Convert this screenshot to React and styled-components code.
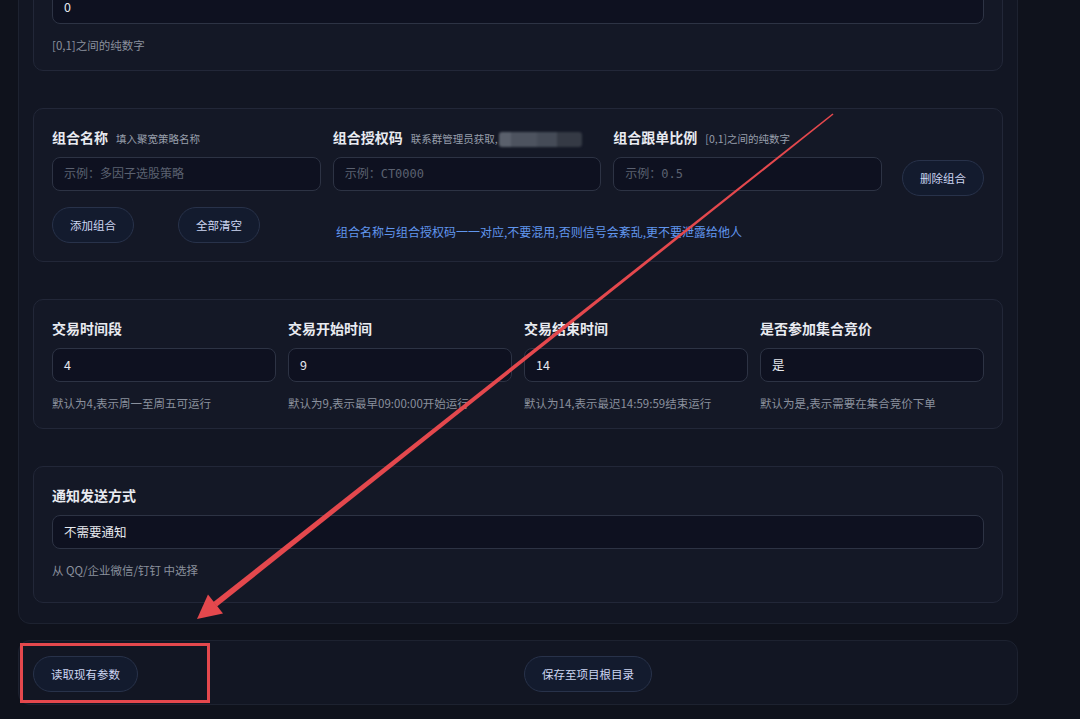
import React from "react";
import styled, { createGlobalStyle } from "styled-components";

const Global = createGlobalStyle`
  html, body { margin: 0; padding: 0; background: #0f121c; overflow: hidden; }
  body { font-family: "Noto Sans CJK SC", "Noto Sans", sans-serif; }
  * { box-sizing: border-box; }
`;

const Page = styled.div`
  width: 1080px;
  height: 719px;
  padding: 0 62px 0 18px;
  overflow: hidden;
  position: relative;
`;

const Panel = styled.div`
  margin-top: -45px;
  background: #121623;
  border: 1px solid #1d2230;
  border-radius: 12px;
  padding: 15px 14px 20px;
  display: flex;
  flex-direction: column;
  gap: 37px;
`;

const Card = styled.section`
  background: #141826;
  border: 1px solid #222738;
  border-radius: 10px;
  padding: ${(p) => p.$pt ?? 18}px 18px ${(p) => p.$pb ?? 16}px;
`;

const Field = styled.div`
  display: flex;
  flex-direction: column;
  flex: 1 1 0;
  min-width: 0;
`;

const LabelRow = styled.div`
  display: flex;
  align-items: baseline;
  gap: 8px;
  height: 20px;
  white-space: nowrap;
`;

const Label = styled.span`
  font-size: 14px;
  line-height: 20px;
  font-weight: 700;
  color: #e8eaf0;
`;

const Hint = styled.span`
  font-size: 10.5px;
  color: #979eab;
  display: inline-flex;
  align-items: center;
`;

const Blur = styled.span`
  display: inline-block;
  width: 83px;
  height: 15px;
  margin-left: 1px;
  border-radius: 3px;
  position: relative;
  top: 1px;
  background: linear-gradient(
    90deg,
    #5a606c 0 14%,
    #4d535f 14% 46%,
    #454b57 46% 70%,
    #353a45 70% 100%
  );
  filter: blur(1.2px);
`;

const Input = styled.div`
  margin-top: ${(p) => p.$mt ?? 10}px;
  height: 34px;
  border: 1px solid #2d3344;
  border-radius: 8px;
  background: #0e1120;
  padding: 0 11px;
  display: flex;
  align-items: center;
  line-height: 1;
  font-size: 12.5px;
  color: ${(p) => (p.$placeholder ? "#5b6170" : "#e6e8ee")};
  font-family: ${(p) =>
    p.$placeholder
      ? `"DejaVu Sans Mono", "Noto Sans CJK SC", monospace`
      : `"Noto Sans CJK SC", "Noto Sans", sans-serif`};
  ${(p) => p.$placeholder && "font-size: 12px;"}
`;

const Helper = styled.div`
  margin-top: 12px;
  font-size: 11.5px;
  line-height: 18px;
  color: #8a909d;
  white-space: nowrap;
`;

const FieldRow = styled.div`
  display: flex;
  gap: 12px;
`;

const Grid4 = styled.div`
  display: grid;
  grid-template-columns: repeat(4, 1fr);
  gap: 12px;
`;

const PillButton = styled.button`
  height: 36px;
  padding: 0 17px;
  border-radius: 18px;
  border: 1px solid #28324a;
  background: #131b2e;
  color: #cdd6f2;
  font-family: "Noto Sans CJK SC", sans-serif;
  font-size: 11.5px;
  white-space: nowrap;
  flex: 0 0 auto;
  justify-self: start;
  margin-left: ${(p) => p.$ml ?? 0}px;
  margin-bottom: ${(p) => p.$mb ?? 0}px;
  align-self: ${(p) => p.$self ?? "auto"};
`;

const ActionRow = styled.div`
  margin-top: 16px;
  display: flex;
  align-items: flex-end;
`;

const Note = styled.span`
  margin-left: 76px;
  margin-bottom: 2px;
  font-size: 12px;
  line-height: 18px;
  color: #6196ee;
  white-space: nowrap;
`;

const BottomBar = styled.div`
  margin-top: 16px;
  background: #121623;
  border: 1px solid #1d2230;
  border-radius: 12px;
  padding: 15px 14px 12px;
  display: grid;
  grid-template-columns: 1fr 1fr;
  gap: 12px;
  align-items: start;
`;

const Overlay = styled.svg`
  position: absolute;
  left: 0;
  top: 0;
  pointer-events: none;
`;

function Annotation() {
  const red = "#e4484d";
  return (
    <Overlay width="1080" height="719" viewBox="0 0 1080 719">
      <polygon
        points="833.5,114.6 832.5,113.4 213.4,602.1 217.0,606.5"
        fill={red}
      />
      <polygon points="197,619 223.0,613.5 208.0,594.5" fill={red} />
      <rect
        x="21.5"
        y="644.5"
        width="187"
        height="57"
        fill="none"
        stroke={red}
        strokeWidth="3"
      />
    </Overlay>
  );
}

export default function App() {
  return (
    <>
      <Global />
      <Page>
        <Panel>
          <Card $pt={18}>
            <Input $mt={0}>0</Input>
            <Helper>[0,1]之间的纯数字</Helper>
          </Card>

          <Card $pb={18}>
            <FieldRow>
              <Field>
                <LabelRow>
                  <Label>组合名称</Label>
                  <Hint>填入聚宽策略名称</Hint>
                </LabelRow>
                <Input $placeholder>示例：多因子选股策略</Input>
              </Field>
              <Field>
                <LabelRow>
                  <Label>组合授权码</Label>
                  <Hint>
                    联系群管理员获取,
                    <Blur />
                  </Hint>
                </LabelRow>
                <Input $placeholder>示例：CT0000</Input>
              </Field>
              <Field>
                <LabelRow>
                  <Label>组合跟单比例</Label>
                  <Hint>[0,1]之间的纯数字</Hint>
                </LabelRow>
                <Input $placeholder>示例：0.5</Input>
              </Field>
              <PillButton $ml={8} $mb={-5} $self="flex-end">
                删除组合
              </PillButton>
            </FieldRow>
            <ActionRow>
              <PillButton>添加组合</PillButton>
              <PillButton $ml={44}>全部清空</PillButton>
              <Note>
                组合名称与组合授权码一一对应,不要混用,否则信号会紊乱,更不要泄露给他人
              </Note>
            </ActionRow>
          </Card>

          <Card>
            <Grid4>
              <Field>
                <LabelRow>
                  <Label>交易时间段</Label>
                </LabelRow>
                <Input>4</Input>
                <Helper>默认为4,表示周一至周五可运行</Helper>
              </Field>
              <Field>
                <LabelRow>
                  <Label>交易开始时间</Label>
                </LabelRow>
                <Input>9</Input>
                <Helper>默认为9,表示最早09:00:00开始运行</Helper>
              </Field>
              <Field>
                <LabelRow>
                  <Label>交易结束时间</Label>
                </LabelRow>
                <Input>14</Input>
                <Helper>默认为14,表示最迟14:59:59结束运行</Helper>
              </Field>
              <Field>
                <LabelRow>
                  <Label>是否参加集合竞价</Label>
                </LabelRow>
                <Input>是</Input>
                <Helper>默认为是,表示需要在集合竞价下单</Helper>
              </Field>
            </Grid4>
          </Card>

          <Card $pb={23}>
            <LabelRow>
              <Label>通知发送方式</Label>
            </LabelRow>
            <Input>不需要通知</Input>
            <Helper>从 QQ/企业微信/钉钉 中选择</Helper>
          </Card>
        </Panel>

        <BottomBar>
          <PillButton>读取现有参数</PillButton>
          <PillButton>保存至项目根目录</PillButton>
        </BottomBar>
        <Annotation />
      </Page>
    </>
  );
}
